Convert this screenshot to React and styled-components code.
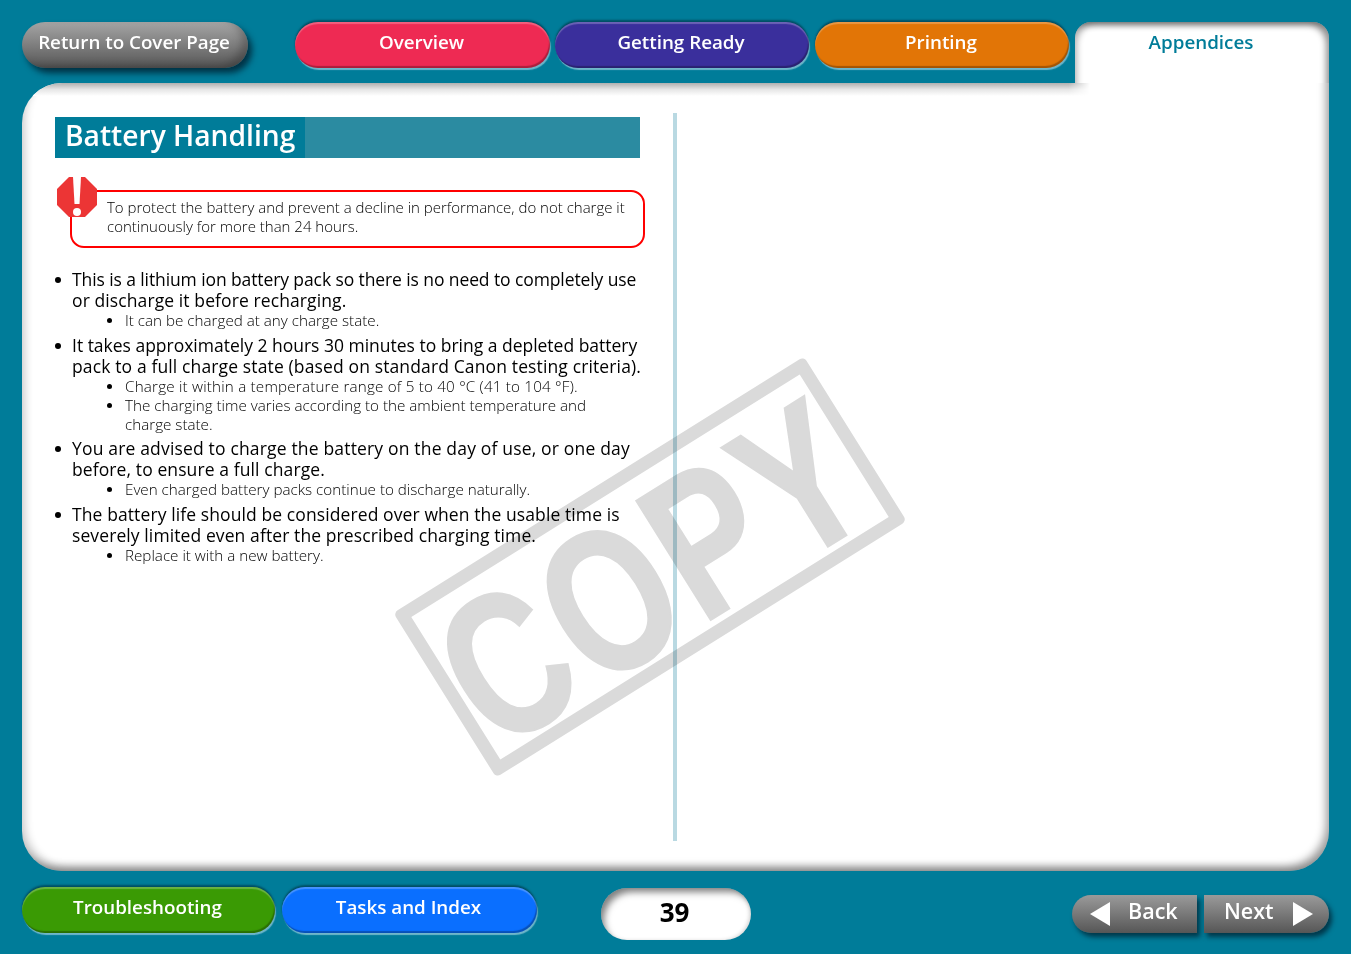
import React from 'react'
import styled, { createGlobalStyle } from 'styled-components'

const Global = createGlobalStyle`
  html, body { margin: 0; padding: 0; background: #007c99; }
  body { font-family: "Open Sans", "Noto Sans", sans-serif; }
  #root { width: 100%; }
`

const Page = styled.div`
  width: 1351px;
  height: 954px;
  box-sizing: border-box;
  padding: 22px 22px 0;
  background: #007c99;
  overflow: hidden;
`

const TopBar = styled.div`
  display: flex;
  height: 61px;
  position: relative;
  z-index: 2;
`

const ReturnButton = styled.div`
  width: 226px;
  height: 46px;
  padding-right: 2px;
  box-sizing: border-box;
  border-radius: 23px;
  margin-right: 47px;
  background: linear-gradient(180deg, #a4a4a4 0%, #8a8a8a 35%, #565656 100%);
  box-shadow:
    4px 5px 6px rgba(0, 25, 40, 0.75),
    inset -8px -4px 8px -2px rgba(0, 0, 0, 0.25);
  color: #fff;
  font-size: 18.8px;
  font-weight: 600;
  line-height: 40px;
  text-align: center;
`

const Pill = styled.div`
  width: ${(p) => p.$width || 254}px;
  height: 46px;
  box-sizing: border-box;
  padding-right: 2px;
  border-radius: 23px;
  margin-right: ${(p) => p.$gap || 5}px;
  background: ${(p) => p.$color};
  box-shadow:
    0 -2px 2px rgba(0, 40, 55, 0.55),
    1px 2px 1px #6fb6ca,
    inset 0 2px 1px rgba(255, 255, 255, 0.25),
    inset -1px -2px 1px rgba(0, 0, 0, 0.28);
  color: #fff;
  font-size: 18.8px;
  font-weight: 600;
  line-height: 40px;
  text-align: center;
`

const Tab = styled.div`
  width: 254px;
  height: 61px;
  box-sizing: border-box;
  padding-right: 2px;
  border-radius: 16px 16px 0 0;
  background: #fff;
  box-shadow:
    inset 6px 6px 6px -4px rgba(0, 0, 0, 0.3),
    inset -6px 6px 6px -3px rgba(0, 0, 0, 0.42);
  color: #007c99;
  font-size: 18.8px;
  font-weight: 600;
  line-height: 40px;
  text-align: center;
`

const Panel = styled.div`
  position: relative;
  height: 788px;
  border-radius: 40px 0 40px 40px;
  background: #fff;
  box-shadow:
    inset 7px -7px 8px -4px rgba(0, 0, 0, 0.2),
    inset -6px -7px 8px -3px rgba(0, 0, 0, 0.38);
  overflow: hidden;

  &::before {
    content: '';
    position: absolute;
    left: 0;
    top: 0;
    width: 1068px;
    height: 13px;
    background: linear-gradient(180deg, #b0b0b0 0%, #e6e6e6 50%, #ffffff 100%);
    mask-image: linear-gradient(90deg, #000 98%, transparent 100%);
  }
`

const Columns = styled.div`
  position: relative;
  display: flex;
  padding: 30px 0 0 33px;
`

const LeftColumn = styled.div`
  width: 618px;
  padding-top: 4px;
`

const Divider = styled.div`
  width: 4px;
  height: 728px;
  background: #b9d9e2;
`

const Heading = styled.div`
  width: 585px;
  height: 41px;
  background: #2b8ba1;
`

const HeadingLabel = styled.h1`
  display: inline-block;
  margin: 0;
  height: 41px;
  padding: 0 10px;
  background: #007c99;
  color: #fff;
  font-size: 28.2px;
  font-weight: 600;
  line-height: 37px;
`

const Warning = styled.div`
  position: relative;
  box-sizing: border-box;
  width: 575px;
  height: 58px;
  margin: 32px 0 0 15px;
  padding: 6px 0 0 35px;
  border: 2px solid #f00;
  border-radius: 14px;
  color: #000;
  font-size: 15px;
  font-weight: 300;
  line-height: 19px;
  white-space: nowrap;
`

const WarningIcon = styled.svg`
  position: absolute;
  left: -15px;
  top: -15px;
  width: 40px;
  height: 40px;
`

const MainList = styled.ul`
  margin: 21px 0 0;
  padding: 0 0 0 17px;
  list-style: none;
`

const MainItem = styled.li`
  position: relative;
  margin-bottom: 4.5px;
  color: #000;
  font-size: 17.5px;
  letter-spacing: 0.1px;
  line-height: 21px;
  white-space: nowrap;

  &::before {
    content: '';
    position: absolute;
    left: -17px;
    top: 8px;
    width: 6px;
    height: 6px;
    border-radius: 50%;
    background: #000;
  }
`

const Line = styled.span`
  letter-spacing: ${(p) => p.$spacing}px;
`

const SubList = styled.ul`
  margin: 0;
  padding: 0 0 0 53px;
  list-style: none;
`

const SubItem = styled.li`
  position: relative;
  color: #000;
  font-size: 15.2px;
  font-weight: 300;
  letter-spacing: 0;
  line-height: 19px;

  &::before {
    content: '';
    position: absolute;
    left: -18px;
    top: 7px;
    width: 5px;
    height: 5px;
    border-radius: 50%;
    background: #000;
  }
`

const Watermark = styled.div`
  position: absolute;
  left: 386px;
  top: 387px;
  box-sizing: border-box;
  width: 484px;
  height: 194px;
  transform: rotate(-32deg);
  border: 13px solid #dadada;
  border-radius: 5px;
  mix-blend-mode: multiply;
  pointer-events: none;
  display: flex;
  align-items: center;
  justify-content: center;
`

const WatermarkText = styled.span`
  display: block;
  color: #dadada;
  font-family: "Liberation Sans", Arial, sans-serif;
  font-size: 204px;
  font-weight: 700;
  letter-spacing: 6px;
  line-height: 168px;
  -webkit-text-stroke: 2px #dadada;
  transform: translateY(6px) scaleX(0.76);
`

const BottomBar = styled.div`
  display: flex;
  align-items: flex-start;
  padding-top: 16px;
`

const PageNumber = styled.div`
  width: 150px;
  height: 52px;
  padding-right: 3px;
  box-sizing: border-box;
  margin: 1px 0 0 58px;
  border-radius: 26px;
  background: #fff;
  box-shadow:
    inset 5px 6px 7px -2px rgba(0, 0, 0, 0.5),
    inset -3px -1px 4px -2px rgba(0, 0, 0, 0.2);
  color: #000;
  font-size: 26px;
  font-weight: 700;
  line-height: 48px;
  text-align: center;
`

const PagerGroup = styled.div`
  display: flex;
  gap: 7px;
  margin: 8px 0 0 auto;
`

const PagerButton = styled.div`
  display: flex;
  align-items: center;
  gap: ${(p) => (p.$side === 'left' ? 18 : 19)}px;
  box-sizing: border-box;
  width: 125px;
  height: 38px;
  padding-left: ${(p) => (p.$side === 'left' ? 18 : 20)}px;
  border-radius: ${(p) => (p.$side === 'left' ? '19px 0 0 19px' : '0 19px 19px 0')};
  background: linear-gradient(180deg, #9a9a9a 0%, #7c7c7c 45%, #565656 100%);
  box-shadow: 3px 4px 5px rgba(0, 25, 40, 0.7);
  color: #fff;
  font-size: 21.5px;
  font-weight: 600;
`

const PagerLabel = styled.span`
  margin-bottom: 7px;
`

const Arrow = styled.svg`
  width: 20px;
  height: 24px;
`

const App = () => {
  return (
    <Page>
      <Global />
      <TopBar>
        <ReturnButton>Return to Cover Page</ReturnButton>
        <Pill $color="#ee2a53" $width={255}>Overview</Pill>
        <Pill $color="#3a2f9c" $gap={6}>Getting Ready</Pill>
        <Pill $color="#e27506" $gap={6}>Printing</Pill>
        <Tab>Appendices</Tab>
      </TopBar>

      <Panel>
        <Columns>
          <LeftColumn>
            <Heading>
              <HeadingLabel>Battery Handling</HeadingLabel>
            </Heading>

            <Warning>
              <WarningIcon viewBox="0 0 40 40">
                <polygon points="12,0 28,0 40,12 40,28 28,40 12,40 0,28 0,12" fill="#ec3535" />
                <path d="M16 0 H24 L22.5 27 H17.5 Z" fill="#fff" />
                <circle cx="20" cy="35" r="4" fill="#fff" />
              </WarningIcon>
              To protect the battery and prevent a decline in performance, do not charge it<br />
              continuously for more than 24 hours.
            </Warning>

            <MainList>
              <MainItem>
                <Line $spacing={-0.1}>This is a lithium ion battery pack so there is no need to completely use</Line><br />
                or discharge it before recharging.
                <SubList>
                  <SubItem>It can be charged at any charge state.</SubItem>
                </SubList>
              </MainItem>
              <MainItem>
                <Line $spacing={-0.01}>It takes approximately 2 hours 30 minutes to bring a depleted battery</Line><br />
                <Line $spacing={0.13}>pack to a full charge state (based on standard Canon testing criteria).</Line>
                <SubList>
                  <SubItem><Line $spacing={0.2}>Charge it within a temperature range of 5 to 40 °C (41 to 104 °F).</Line></SubItem>
                  <SubItem>
                    The charging time varies according to the ambient temperature and<br />
                    charge state.
                  </SubItem>
                </SubList>
              </MainItem>
              <MainItem>
                <Line $spacing={0.17}>You are advised to charge the battery on the day of use, or one day</Line><br />
                before, to ensure a full charge.
                <SubList>
                  <SubItem>Even charged battery packs continue to discharge naturally.</SubItem>
                </SubList>
              </MainItem>
              <MainItem>
                The battery life should be considered over when the usable time is<br />
                severely limited even after the prescribed charging time.
                <SubList>
                  <SubItem>Replace it with a new battery.</SubItem>
                </SubList>
              </MainItem>
            </MainList>
          </LeftColumn>
          <Divider />
        </Columns>
        <Watermark>
          <WatermarkText>COPY</WatermarkText>
        </Watermark>
      </Panel>

      <BottomBar>
        <Pill $color="#3a9a04" $width={253} $gap={7}>Troubleshooting</Pill>
        <Pill $color="#0a6fff" $width={255} $gap={6}>Tasks and Index</Pill>
        <PageNumber>39</PageNumber>
        <PagerGroup>
          <PagerButton $side="left">
            <Arrow viewBox="0 0 20 24"><polygon points="0,12 20,0 20,24" fill="#fff" /></Arrow>
            <PagerLabel>Back</PagerLabel>
          </PagerButton>
          <PagerButton $side="right">
            <PagerLabel>Next</PagerLabel>
            <Arrow viewBox="0 0 20 24"><polygon points="20,12 0,0 0,24" fill="#fff" /></Arrow>
          </PagerButton>
        </PagerGroup>
      </BottomBar>
    </Page>
  )
}

export default App
